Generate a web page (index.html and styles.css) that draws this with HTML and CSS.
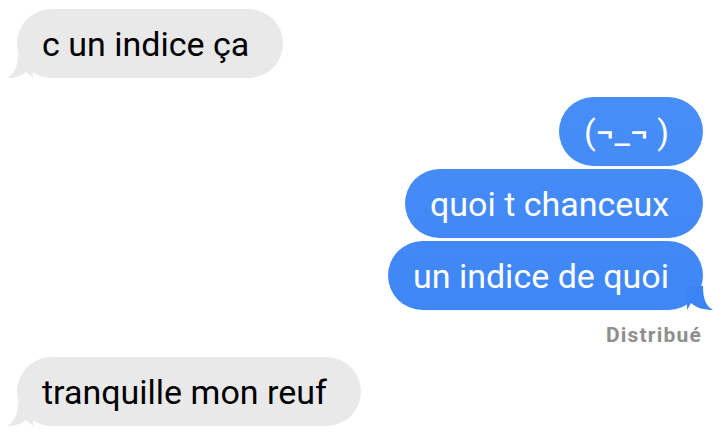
FILE: index.html
```html
<!DOCTYPE html>
<html>
<head>
    <title>Messages</title>
    <link rel="stylesheet" href="styles.css">
</head>
<body>
    <div class="thread">
        <div class="bubble received tail">
            c un indice ça
            <svg class="tail-shape" width="26" height="24" viewBox="0 0 26 24"><path d="M11 0 C11 13 7 20 0 24 C8 24 14 22 19 18 L26 24 L26 0 Z"/></svg>
        </div>

        <div class="group sent-group">
            <div class="bubble sent">(¬_¬ )</div>
            <div class="bubble sent">quoi t chanceux</div>
            <div class="bubble sent tail">
                un indice de quoi
                <svg class="tail-shape" width="26" height="24" viewBox="0 0 26 24"><path d="M16 0 C16 13 19 20 26 24 C17 24 10 22 4 17 L0 24 L0 0 Z"/></svg>
            </div>
            <div class="status">Distribué</div>
        </div>

        <div class="bubble received tail">
            tranquille mon reuf
            <svg class="tail-shape" width="26" height="24" viewBox="0 0 26 24"><path d="M11 0 C11 13 7 20 0 24 C8 24 14 22 19 18 L26 24 L26 0 Z"/></svg>
        </div>
    </div>
</body>
</html>
```

FILE: styles.css
```css
body {
    margin: 0;
    background: #fff;
    font-family: Roboto, "Noto Sans", sans-serif;
}
.thread {
    display: flex;
    flex-direction: column;
    align-items: flex-start;
    padding: 9px 21px 0 17px;
}
.bubble {
    position: relative;
    height: 69px;
    box-sizing: border-box;
    display: flex;
    align-items: center;
    padding: 0 34px 0 25px;
    border-radius: 35px;
    font-size: 34px;
    white-space: nowrap;
}
.received {
    background: #e9e9e9;
    color: #000;
    margin-bottom: 19px;
}
.received .tail-shape {
    position: absolute;
    left: -10px;
    bottom: 0;
    fill: #e9e9e9;
}
.sent-group {
    align-self: stretch;
    display: flex;
    flex-direction: column;
    align-items: flex-end;
    gap: 3px;
}
.sent {
    color: #fff;
    background: linear-gradient(#4b91f7, #3a82f6) fixed;
}
.sent .tail-shape {
    position: absolute;
    right: -10px;
    bottom: 0;
    fill: #3b84f6;
}
.status {
    font-size: 21px;
    line-height: 24px;
    font-weight: 700;
    letter-spacing: 1.2px;
    color: #8e8e8e;
    margin: 10px 1px 10px 0;
}
```
